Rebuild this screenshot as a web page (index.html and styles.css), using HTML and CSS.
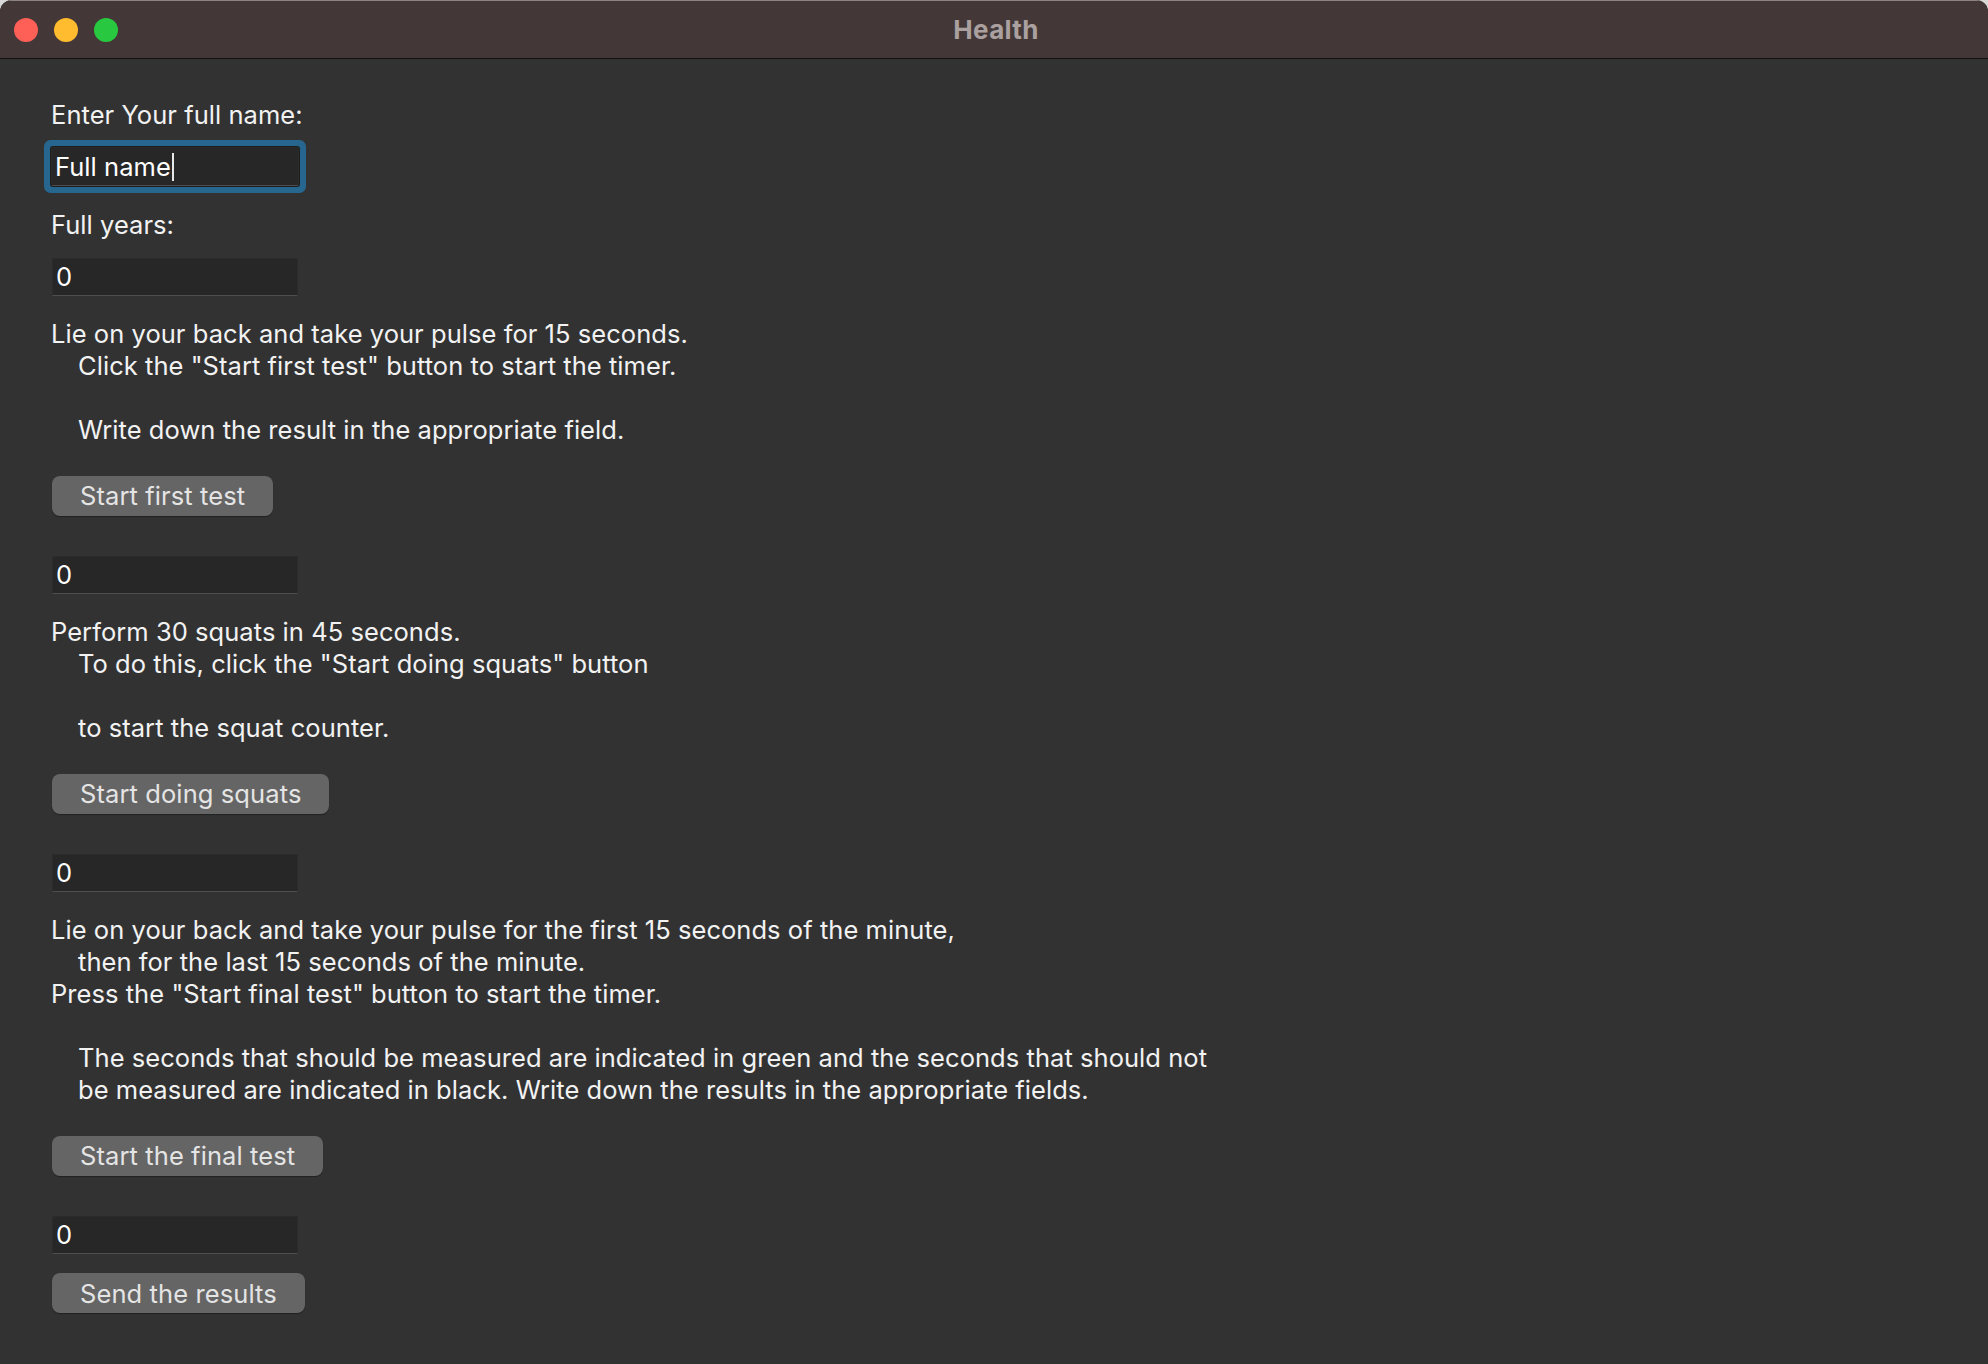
FILE: index.html
```html
<!DOCTYPE html>
<html lang="en">
<head>
<meta charset="utf-8">
<title>Health</title>
<link rel="stylesheet" href="styles.css">
</head>
<body>
<div class="window">
  <header class="titlebar">
    <div class="lights">
      <span class="light red"></span>
      <span class="light yellow"></span>
      <span class="light green"></span>
    </div>
    <div class="title">Health</div>
  </header>
  <main class="content">
    <p class="label">Enter Your full name:</p>
    <div class="field focused"><span class="value">Full name</span><span class="caret"></span></div>

    <p class="label">Full years:</p>
    <div class="field"><span class="value">0</span></div>

    <div class="label">
      <p class="line">Lie on your back and take your pulse for 15 seconds.</p>
      <p class="line indent">Click the "Start first test" button to start the timer.</p>
      <p class="line blank"></p>
      <p class="line indent">Write down the result in the appropriate field.</p>
    </div>
    <button class="btn" type="button">Start first test</button>
    <div class="field"><span class="value">0</span></div>

    <div class="label">
      <p class="line">Perform 30 squats in 45 seconds.</p>
      <p class="line indent">To do this, click the "Start doing squats" button</p>
      <p class="line blank"></p>
      <p class="line indent">to start the squat counter.</p>
    </div>
    <button class="btn" type="button">Start doing squats</button>
    <div class="field"><span class="value">0</span></div>

    <div class="label">
      <p class="line">Lie on your back and take your pulse for the first 15 seconds of the minute,</p>
      <p class="line indent">then for the last 15 seconds of the minute.</p>
      <p class="line">Press the "Start final test" button to start the timer.</p>
      <p class="line blank"></p>
      <p class="line indent">The seconds that should be measured are indicated in green and the seconds that should not</p>
      <p class="line indent">be measured are indicated in black. Write down the results in the appropriate fields.</p>
    </div>
    <button class="btn" type="button">Start the final test</button>
    <div class="field"><span class="value">0</span></div>
    <button class="btn" type="button">Send the results</button>
  </main>
</div>
</body>
</html>
```

FILE: styles.css
```css
* { box-sizing: border-box; }

html, body {
  margin: 0;
  padding: 0;
  height: 100%;
  background: #d8d8d8;
}

body {
  font-family: Inter, "Liberation Sans", sans-serif;
  font-size: 25.5px;
  letter-spacing: 0.05px;
  color: #f2f2f2;
}

.window {
  height: 1364px;
  width: 1988px;
  background: #323232;
  border-radius: 12px 12px 0 0;
  overflow: hidden;
  display: flex;
  flex-direction: column;
}

.titlebar {
  height: 59px;
  flex: none;
  background: #433837;
  border-top: 1px solid #8c8584;
  border-bottom: 1px solid #121212;
  position: relative;
  display: flex;
  align-items: center;
  justify-content: center;
}

.lights {
  position: absolute;
  left: 14px;
  top: 17px;
  display: flex;
  gap: 16px;
}

.light {
  width: 24px;
  height: 24px;
  border-radius: 50%;
  display: block;
}
.red { background: #fe5f57; }
.yellow { background: #febc2e; }
.green { background: #28c840; }

.title {
  font-weight: 700;
  font-size: 26px;
  color: #a9a09f;
  margin-top: -1px;
  margin-left: 4px;
  letter-spacing: 0.3px;
}

.content {
  padding: 39.5px 0 0 52px;
  display: flex;
  flex-direction: column;
  align-items: flex-start;
}

.label {
  margin: 0;
  line-height: 31.9px;
  margin-left: -1px;
}

.line {
  margin: 0;
  height: 31.9px;
  white-space: nowrap;
}

.indent { padding-left: 27px; }

.field {
  width: 246px;
  height: 38px;
  background: #272727;
  border: 1px solid #2b2b2b;
  border-bottom: 1px solid #4e4e4e;
  display: flex;
  align-items: center;
  padding-left: 3px;
  color: #ffffff;
}

.field.focused {
  width: 248px;
  height: 39px;
  margin-left: -1px;
  border-radius: 2px;
  box-shadow: 0 0 0 1px #1d1d1d, 0 0 0 7px #27668f;
}

.caret {
  display: block;
  width: 2px;
  height: 28px;
  background: #e8e8e8;
  margin-left: 1px;
}

.btn {
  font-family: inherit;
  font-size: 25.5px;
  letter-spacing: 0.1px;
  height: 40px;
  padding: 0 28px;
  border: none;
  border-radius: 8px;
  background: #656565;
  color: #e4e4e4;
  box-shadow: 0 1px 1px rgba(0, 0, 0, 0.35);
  display: flex;
  align-items: center;
  justify-content: center;
}

.label + .field { margin-top: 17px; }
.field + .label { margin-top: 22.5px; }
.label + .btn { margin-top: 30px; }
.btn + .field { margin-top: 40px; }
.field + .btn { margin-top: 19.5px; }
```
